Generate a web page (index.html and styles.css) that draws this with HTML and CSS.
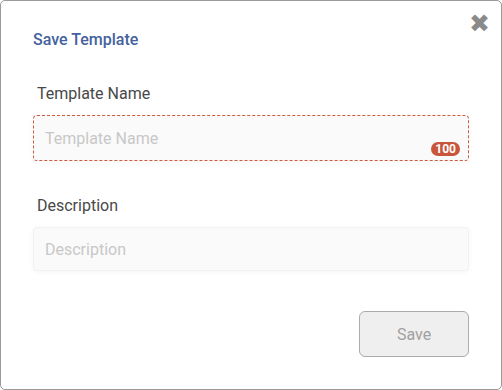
FILE: index.html
```html
<!DOCTYPE html>
<html lang="en">
<head>
  <meta charset="UTF-8" />
  <title>Save Template</title>
  <link rel="stylesheet" href="styles.css">
</head>
<body>
  <div class="dialog">
    <div class="dialog-header">
      <div class="dialog-title">Save Template</div>
      <div class="close-btn">&#10006;</div>
    </div>

    <div class="field">
      <label class="field-label">Template Name</label>
      <div class="input-wrap invalid">
        <input type="text" placeholder="Template Name" />
        <span class="counter">100</span>
      </div>
    </div>

    <div class="field">
      <label class="field-label">Description</label>
      <div class="input-wrap">
        <input type="text" placeholder="Description" />
      </div>
    </div>

    <div class="dialog-footer">
      <button class="save-btn" disabled>Save</button>
    </div>
  </div>
</body>
</html>
```

FILE: styles.css
```css
* {
  box-sizing: border-box;
  margin: 0;
  padding: 0;
  font-family: Roboto, 'Liberation Sans', sans-serif;
}

html, body {
  width: 100%;
  height: 100%;
  background: #fff;
}

.dialog {
  width: 502px;
  height: 390px;
  border: 1px solid #9a9a9a;
  border-radius: 5px;
  padding: 0 32px;
  display: flex;
  flex-direction: column;
  position: relative;
}

.dialog-header {
  padding-top: 29px;
}

.dialog-title {
  color: #44629e;
  font-size: 16px;
  font-weight: 500;
  line-height: 20px;
}

.close-btn {
  position: absolute;
  top: 8px;
  right: 11px;
  color: #8a8a8a;
  font-size: 25px;
  line-height: 30px;
  font-family: 'DejaVu Sans', sans-serif;
  cursor: pointer;
}

.field {
  margin-top: 34px;
}

.field + .field {
  margin-top: 35px;
}

.field-label {
  display: block;
  color: #484848;
  font-size: 16px;
  line-height: 20px;
  padding-left: 4px;
  margin-bottom: 11px;
}

.input-wrap {
  position: relative;
  height: 44px;
  border: 1px solid #f1f1f1;
  border-radius: 4px;
  background: #fafafa;
  box-shadow: 0 1px 6px rgba(0, 0, 0, 0.04);
}

.input-wrap.invalid {
  height: 46px;
  border: 1px dashed #cf5a3f;
}

.input-wrap input {
  width: 100%;
  height: 100%;
  border: none;
  outline: none;
  background: transparent;
  padding: 0 11px;
  font-size: 16px;
  color: #444;
}

.input-wrap input::placeholder {
  color: #c8c8c8;
}

.counter {
  position: absolute;
  right: 8px;
  bottom: 4px;
  background: #c9553a;
  color: #fff;
  font-size: 12px;
  font-weight: 700;
  line-height: 14px;
  padding: 0 4px;
  border-radius: 7px;
}

.dialog-footer {
  display: flex;
  justify-content: flex-end;
  margin-top: 40px;
}

.save-btn {
  width: 110px;
  height: 46px;
  border: 1px solid #ababab;
  border-radius: 6px;
  background: #efefef;
  color: #a0a0a0;
  font-size: 16px;
}
```
